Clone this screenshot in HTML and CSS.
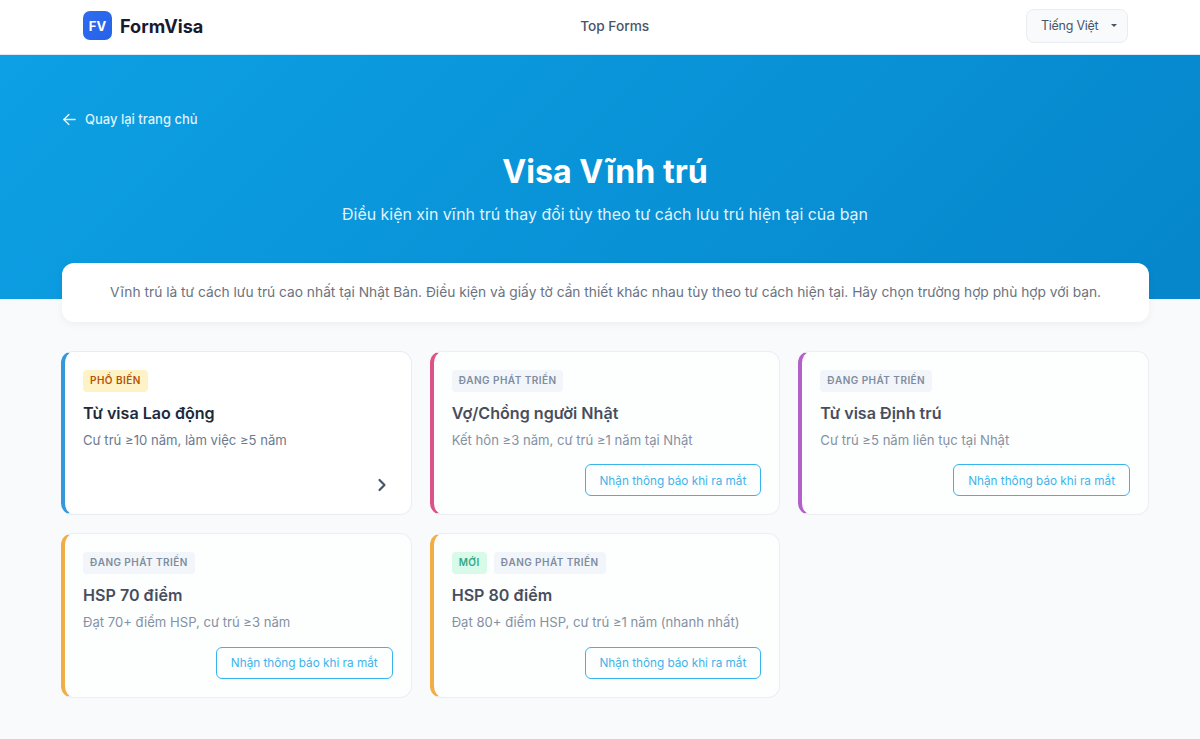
FILE: index.html
```html
<!DOCTYPE html>
<html lang="vi">
<head>
    <meta charset="UTF-8">
    <meta name="viewport" content="width=device-width, initial-scale=1">
    <title>Visa Vĩnh trú - FormVisa</title>
    <link rel="stylesheet" href="styles.css">
</head>
<body>

    <header class="header">
        <a href="#" class="logo">
            <span class="logo-icon">FV</span>
            <span class="logo-text">FormVisa</span>
        </a>
        <a href="#" class="nav-link">Top Forms</a>
        <div class="lang-select">Tiếng Việt <span class="caret"></span></div>
    </header>

    <section class="hero">
        <a href="#" class="back-link">
            <svg class="back-icon" width="15" height="15" viewBox="0 0 24 24" fill="none" stroke="currentColor" stroke-width="2.2" stroke-linecap="round" stroke-linejoin="round"><path d="M21 12H3"/><path d="M11 20l-8-8 8-8"/></svg>
            Quay lại trang chủ
        </a>
        <h1>Visa Vĩnh trú</h1>
        <p class="subtitle">Điều kiện xin vĩnh trú thay đổi tùy theo tư cách lưu trú hiện tại của bạn</p>
    </section>

    <main class="content">
        <div class="intro">Vĩnh trú là tư cách lưu trú cao nhất tại Nhật Bản. Điều kiện và giấy tờ cần thiết khác nhau tùy theo tư cách hiện tại. Hãy chọn trường hợp phù hợp với bạn.</div>

        <div class="cards">
            <a href="#" class="card card-blue">
                <div class="badges"><span class="badge badge-popular">PHỔ BIẾN</span></div>
                <h3>Từ visa Lao động</h3>
                <p>Cư trú ≥10 năm, làm việc ≥5 năm</p>
                <div class="card-foot">
                    <svg class="chevron" width="20" height="20" viewBox="0 0 24 24" fill="none" stroke="currentColor" stroke-width="2.6" stroke-linecap="round" stroke-linejoin="round"><path d="M9 6l6 6-6 6"/></svg>
                </div>
            </a>

            <div class="card card-pink dev">
                <div class="badges"><span class="badge badge-dev">ĐANG PHÁT TRIỂN</span></div>
                <h3>Vợ/Chồng người Nhật</h3>
                <p>Kết hôn ≥3 năm, cư trú ≥1 năm tại Nhật</p>
                <div class="card-foot"><button class="notify">Nhận thông báo khi ra mắt</button></div>
            </div>

            <div class="card card-purple dev">
                <div class="badges"><span class="badge badge-dev">ĐANG PHÁT TRIỂN</span></div>
                <h3>Từ visa Định trú</h3>
                <p>Cư trú ≥5 năm liên tục tại Nhật</p>
                <div class="card-foot"><button class="notify">Nhận thông báo khi ra mắt</button></div>
            </div>

            <div class="card card-orange dev">
                <div class="badges"><span class="badge badge-dev">ĐANG PHÁT TRIỂN</span></div>
                <h3>HSP 70 điểm</h3>
                <p>Đạt 70+ điểm HSP, cư trú ≥3 năm</p>
                <div class="card-foot"><button class="notify">Nhận thông báo khi ra mắt</button></div>
            </div>

            <div class="card card-orange dev">
                <div class="badges"><span class="badge badge-new">MỚI</span><span class="badge badge-dev">ĐANG PHÁT TRIỂN</span></div>
                <h3>HSP 80 điểm</h3>
                <p>Đạt 80+ điểm HSP, cư trú ≥1 năm (nhanh nhất)</p>
                <div class="card-foot"><button class="notify">Nhận thông báo khi ra mắt</button></div>
            </div>
        </div>
    </main>

</body>
</html>
```

FILE: styles.css
```css
* {
    box-sizing: border-box;
}

body {
    margin: 0;
    background-color: #f8fafc;
    color: #1e293b;
    font-family: Inter, "Noto Sans", sans-serif;
}

a {
    color: inherit;
    text-decoration: none;
}

/* Header */
.header {
    display: flex;
    align-items: center;
    justify-content: space-between;
    height: 55px;
    padding: 0 72px 3px 83px;
    background-color: #fff;
    border-bottom: 1px solid #e2e8f0;
}

.logo {
    display: flex;
    align-items: center;
    gap: 8px;
}

.logo-icon {
    display: flex;
    align-items: center;
    justify-content: center;
    width: 29px;
    height: 29px;
    border-radius: 7px;
    background: linear-gradient(135deg, #2f6bed, #2563eb);
    color: #fff;
    font-size: 13px;
    font-weight: 700;
}

.logo-text {
    color: #1a1a2e;
    font-size: 18.1px;
    font-weight: 700;
}

.nav-link {
    color: #475569;
    font-size: 13.7px;
    font-weight: 500;
}

.lang-select {
    display: flex;
    align-items: center;
    justify-content: space-between;
    width: 102px;
    height: 34px;
    padding: 0 10px 0 14px;
    border: 1px solid #e8edf3;
    border-radius: 8px;
    background-color: #f8fafc;
    color: #475569;
    font-size: 12.5px;
    letter-spacing: -0.25px;
}

.caret {
    width: 0;
    height: 0;
    border-top: 3.5px solid #475569;
    border-left: 3.5px solid transparent;
    border-right: 3.5px solid transparent;
}

/* Hero */
.hero {
    height: 244px;
    padding: 55.5px 51px 0 61px;
    background: linear-gradient(135deg, #0da0e4, #0686cb);
    color: #fff;
    text-align: center;
}

.back-link {
    display: flex;
    align-items: center;
    gap: 8px;
    height: 17px;
    color: rgba(255, 255, 255, 0.88);
    font-size: 13px;
    font-weight: 500;
}

.back-icon {
    margin-left: 1px;
}

.hero h1 {
    margin: 22.5px 0 0;
    font-size: 32.2px;
    line-height: 44px;
    font-weight: 700;
}

.subtitle {
    margin: 9px 0 0;
    color: rgba(255, 255, 255, 0.9);
    font-size: 15.95px;
    line-height: 24px;
}

/* Content */
.content {
    padding: 0 51px 41px 61px;
}

.intro {
    position: relative;
    height: 59px;
    margin: -36px 0 0 1px;
    padding: 0 20px;
    border-radius: 12px;
    background-color: #fff;
    box-shadow: 0 2px 8px rgba(15, 23, 42, 0.05);
    color: #6b7280;
    font-size: 13.75px;
    line-height: 59px;
    text-align: center;
    white-space: nowrap;
}

.cards {
    display: grid;
    grid-template-columns: repeat(3, 1fr);
    grid-template-rows: 164px 164.2px;
    gap: 18.4px 18px;
    margin-top: 29px;
}

.card {
    display: flex;
    flex-direction: column;
    padding: 18px;
    border: 1px solid #e8edf3;
    border-left-width: 4px;
    border-radius: 12px;
    background-color: #fff;
}

.card.dev {
    opacity: 0.82;
}

.card-blue { border-left-color: #3498db; }
.card-pink { border-left-color: #d62f6f; }
.card-purple { border-left-color: #a63fc0; }
.card-orange { border-left-color: #f29d1f; }

.badges {
    display: flex;
    gap: 7px;
}

.badge {
    padding: 0 7px 1px;
    border-radius: 4px;
    font-size: 10px;
    font-weight: 600;
    line-height: 21px;
    letter-spacing: 0.45px;
}

.badge-popular {
    background-color: #fef3c7;
    color: #b45309;
}

.badge-dev {
    background-color: #f1f5f9;
    color: #64748b;
}

.badge-new {
    background-color: #d1fae5;
    color: #059669;
}

.card h3 {
    margin: 9px 0 0;
    color: #1e293b;
    font-size: 16.1px;
    font-weight: 600;
    line-height: 24px;
}

.card p {
    margin: 5px 0 0;
    color: #6b7a90;
    font-size: 13.1px;
    line-height: 20px;
}

.card-foot {
    display: flex;
    justify-content: flex-end;
    align-items: center;
    margin-top: auto;
}

.chevron {
    color: #475569;
    margin: 0 1px 1px 0;
}

.notify {
    height: 32px;
    padding: 1px 14px 0;
    border: 1px solid #0ea5e9;
    border-radius: 6px;
    background-color: #fff;
    color: #0ea5e9;
    font-family: inherit;
    font-size: 11.75px;
    font-weight: 400;
}
```
